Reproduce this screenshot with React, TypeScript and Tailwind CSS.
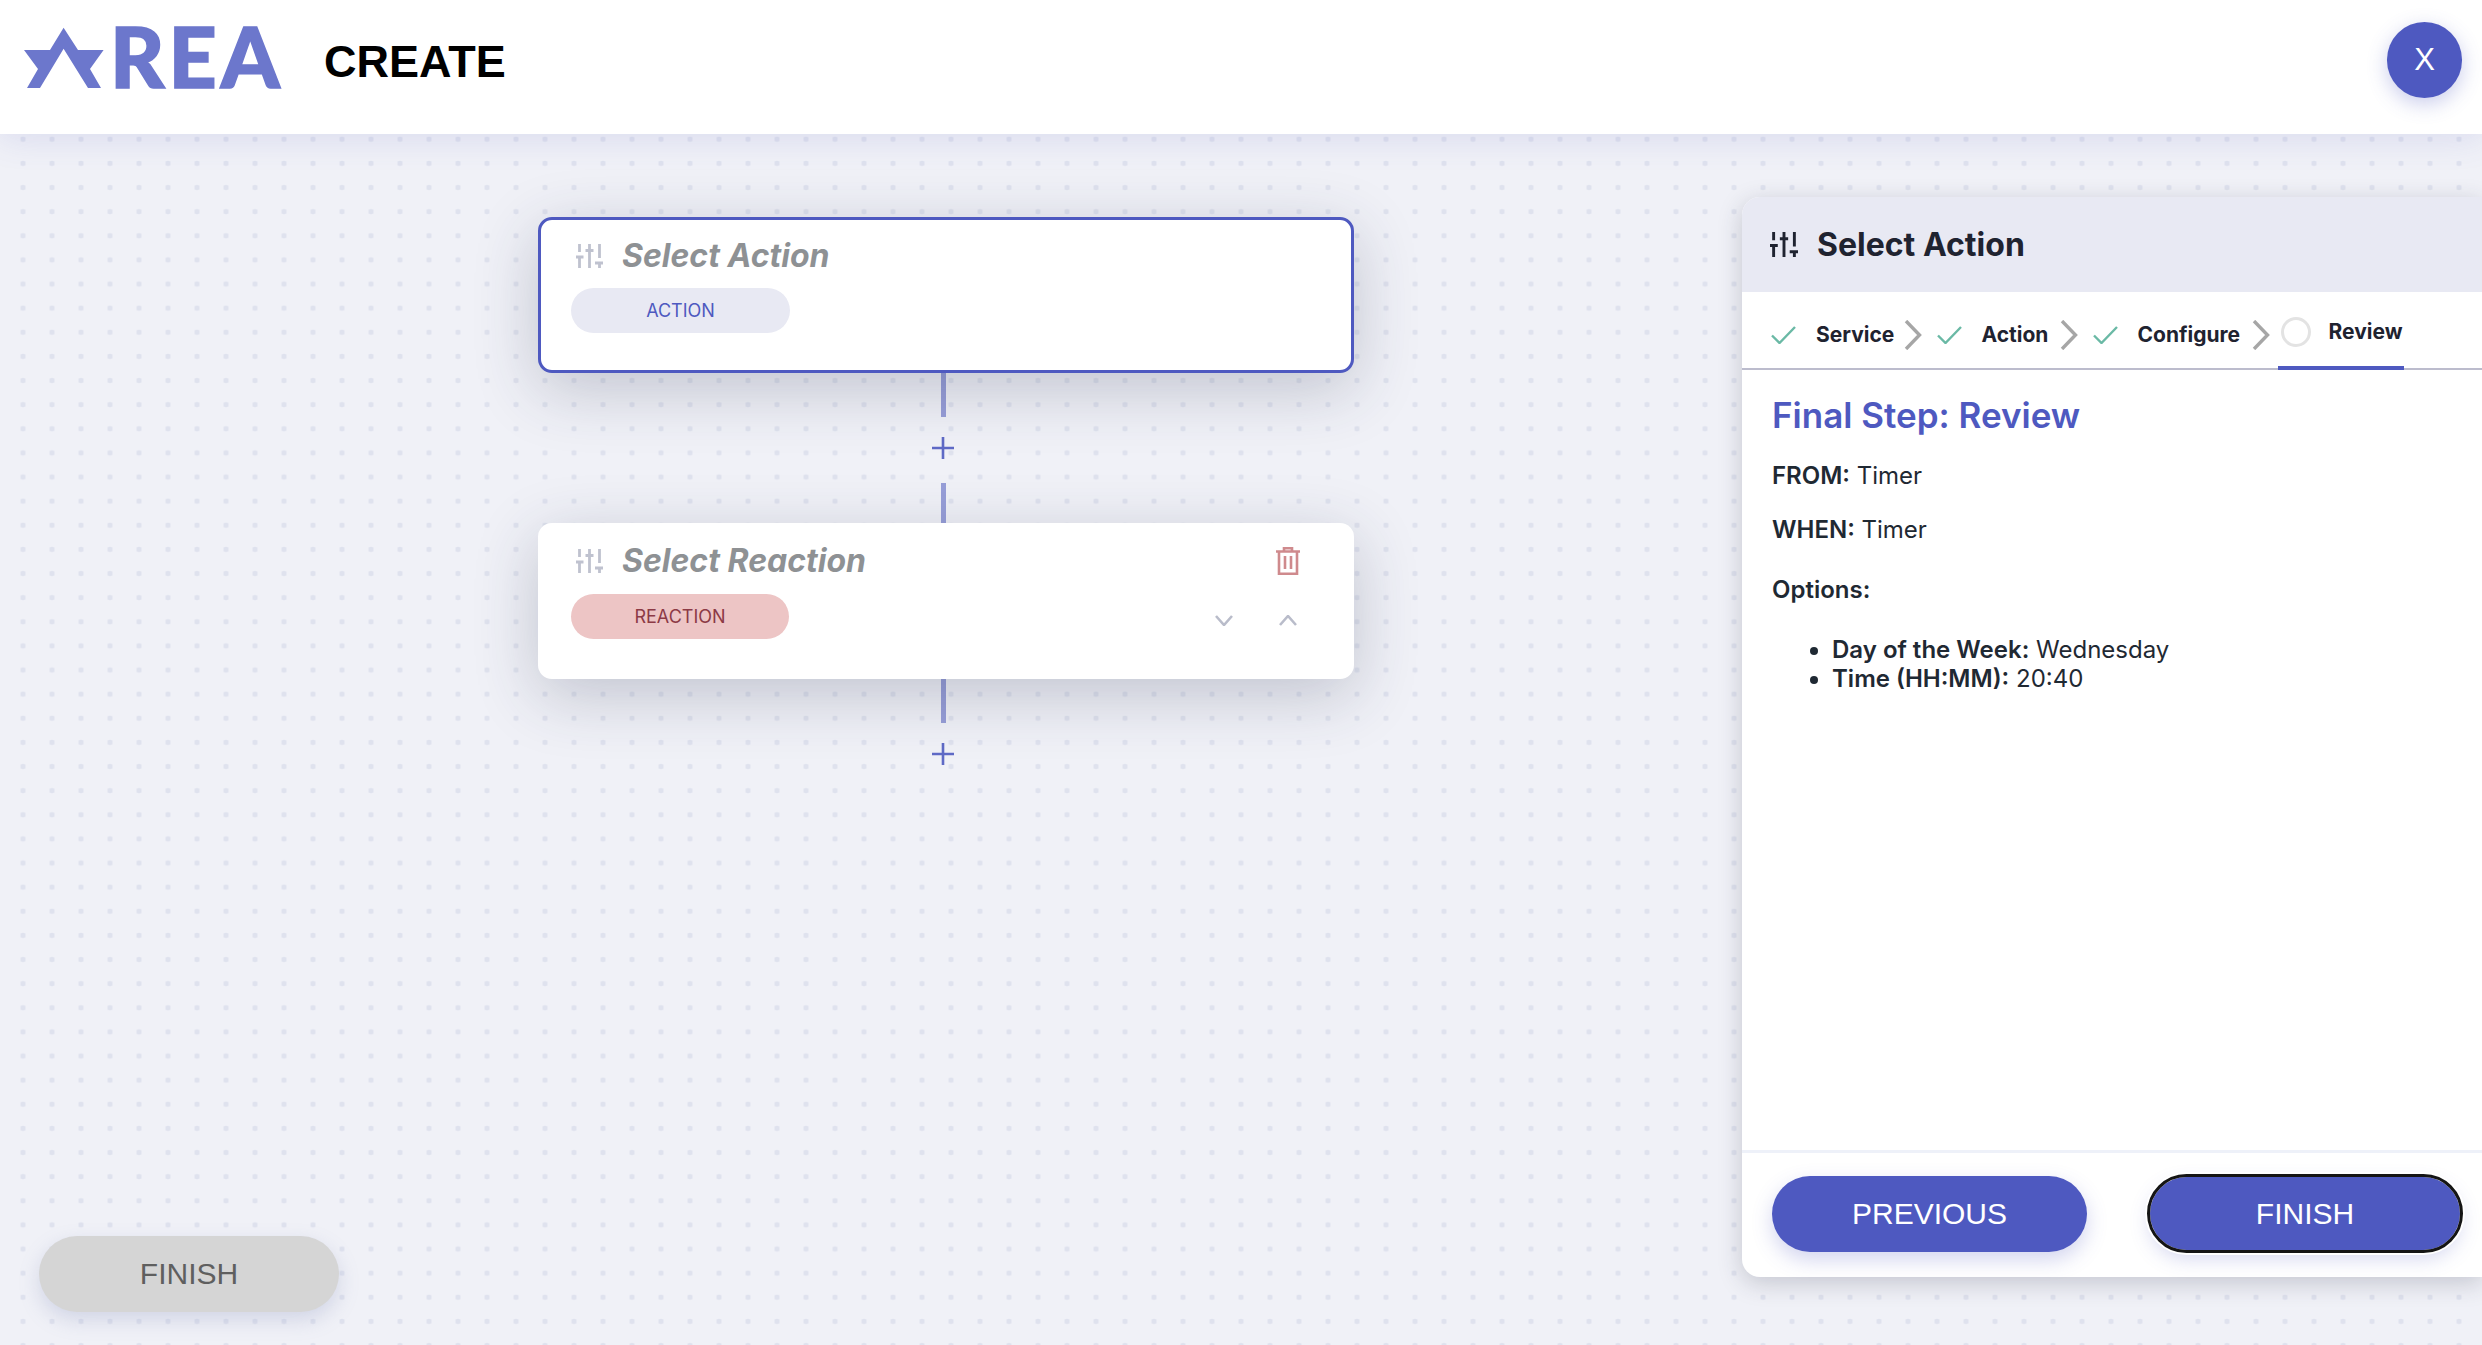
import React from "react";

const Sliders = ({ className }: { className: string }) => (
  <svg viewBox="0 0 27 24" className={className} fill="none" stroke="currentColor" strokeWidth="2.8">
    <path d="M3.5 0V8M0 13H7.5M3.5 14V24M13.5 0V5M9.5 6.5H17.5M13.5 8V24M23.5 0V14M19 19H27M23.5 20V24" />
  </svg>
);

const Check = () => (
  <svg viewBox="0 0 25 18" className="w-[25px] h-[18px] shrink-0 text-[#6ab9a5]" fill="none" stroke="currentColor" strokeWidth="2.4">
    <path d="M1 9.5L8.5 17L24 1" />
  </svg>
);

const Chev = () => (
  <svg viewBox="0 0 18 30" className="w-[18px] h-[30px] shrink-0 text-[#a6a6a6]" fill="none" stroke="currentColor" strokeWidth="3.4">
    <path d="M2 1L15.5 15L2 29" />
  </svg>
);

const Step = ({ label, w }: { label: string; w: string }) => (
  <div className="flex items-center shrink-0">
    <Check />
    <span className={`ml-[20px] mr-[10px] text-[21px] font-bold text-[#1f2330] whitespace-nowrap ${w}`}>{label}</span>
    <Chev />
  </div>
);

const Connector = ({ h }: { h: string }) => <div className={`w-[5px] bg-[#979ed8] mr-[5px] ${h}`} />;

const Plus = () => (
  <svg viewBox="0 0 22 22" className="w-[22px] h-[22px] mt-[20px] mb-[24px] mr-[7px] text-[#5f6ac6]" fill="none" stroke="currentColor" strokeWidth="2.6">
    <path d="M11 0V22M0 11H22" />
  </svg>
);

export default function App() {
  return (
    <div className="w-[2482px] h-[1345px] flex flex-col overflow-hidden font-['Inter',sans-serif] bg-[#f0f1f7]">
      <header className="relative z-10 h-[134px] shrink-0 bg-white flex items-center shadow-[0_2px_34px_rgba(78,89,192,0.16)]">
        <div className="flex items-start ml-[24px] h-[61px] mt-[-20px] text-[#6c77cc]">
          <svg viewBox="0 0 80 61" className="w-[80px] h-[61px] shrink-0" fill="currentColor">
            <path d="M39.6 0.7L54 22.9H79.6L66 42L77 60.9H64L39.6 21.7L16 60.9H3L14 42L0 22.9H26Z" />
          </svg>
          <span className="ml-[6px] mt-[-2px] text-[84px] leading-[61px] font-black font-['Lato',sans-serif] tracking-[4px] [-webkit-text-stroke:1.5px_#6c77cc]">REA</span>
        </div>
        <h1 className="absolute left-[324px] top-[37px] text-[45px] leading-[50px] font-bold text-black font-['Liberation_Sans',sans-serif]">CREATE</h1>
        <button className="absolute left-[2387px] top-[22px] w-[75px] h-[76px] rounded-full bg-[#4e59c0] text-white text-[31px] font-['Liberation_Sans',sans-serif] shadow-[0_6px_20px_rgba(78,89,192,0.3)]">X</button>
      </header>

      <main className="flex-1 flex bg-[radial-gradient(circle,#dfe2ee_2.6px,transparent_3px)] bg-[size:29px_24.14px] bg-[position:8.5px_-6.8px]">
        <div className="w-[1742px] shrink-0 flex flex-col justify-between pl-[39px] pb-[33px] pt-[83px]">
          <div className="ml-[499px] w-[816px] flex flex-col items-center">
            <div className="relative w-full h-[156px] bg-white border-[3px] border-[#4e59c0] rounded-[14px] pt-[16px] pl-[30px] shadow-[0_16px_64px_rgba(40,50,80,0.24)]">
              <div className="flex items-center h-[40px] pl-[5px]">
                <Sliders className="w-[27px] h-[24px] text-[#bfc2cf]" />
                <span className="ml-[19px] text-[32px] font-bold italic text-[#8e9194]">Select Action</span>
              </div>
              <div className="mt-[12px] w-[219px] h-[45px] rounded-full bg-[#e8e9f3] flex items-center justify-center text-[18px] text-[#4e59c0]">ACTION</div>
            </div>
            <Connector h="h-[44px]" />
            <Plus />
            <Connector h="h-[40px]" />
            <div className="relative w-full h-[156px] bg-white rounded-[14px] pt-[18px] pl-[33px] pr-[54px] shadow-[0_16px_64px_rgba(40,50,80,0.24)]">
              <div className="flex items-center h-[40px] pl-[5px]">
                <Sliders className="w-[27px] h-[24px] text-[#bfc2cf]" />
                <span className="ml-[19px] text-[32px] font-bold italic text-[#8e9194]">Select Reaction</span>
                <svg viewBox="0 0 24 28" className="ml-auto w-[24px] h-[28px] text-[#cf8a8d]" fill="none" stroke="currentColor" strokeWidth="2.6">
                  <path d="M0 4.5H24M8 4V1.3H16V4M3 4.5V26.7H21V4.5M9 9V22M15 9V22" />
                </svg>
              </div>
              <div className="mt-[13px] flex items-center">
                <div className="w-[218px] h-[45px] rounded-full bg-[#edc5c5] flex items-center justify-center text-[18px] text-[#8c3a45]">REACTION</div>
                <svg viewBox="0 0 18 11" className="ml-auto mt-[8px] w-[18px] h-[11px] text-[#b9bcca]" fill="none" stroke="currentColor" strokeWidth="2.6">
                  <path d="M1 1L9 10L17 1" />
                </svg>
                <svg viewBox="0 0 18 11" className="ml-[46px] mr-[3px] mt-[8px] w-[18px] h-[11px] text-[#b9bcca]" fill="none" stroke="currentColor" strokeWidth="2.6">
                  <path d="M1 10L9 1L17 10" />
                </svg>
              </div>
            </div>
            <Connector h="h-[44px]" />
            <Plus />
          </div>
          <button className="w-[300px] h-[76px] pb-[2px] rounded-full bg-[#d5d5d5] text-[#5f5f5f] text-[30px] font-['Liberation_Sans',sans-serif] shadow-[0_8px_20px_rgba(120,130,180,0.25)]">FINISH</button>
        </div>

        <aside className="flex-1 mt-[63px] h-[1080px] flex flex-col bg-white rounded-l-[18px] shadow-[0_6px_24px_rgba(40,45,70,0.22)]">
          <div className="h-[95px] shrink-0 bg-[#e8e9f3] rounded-tl-[18px] flex items-center pl-[28px]">
            <Sliders className="w-[28px] h-[25px] text-[#1f2330]" />
            <h2 className="ml-[19px] text-[32px] font-bold text-[#1f2330]">Select Action</h2>
          </div>
          <div className="h-[78px] shrink-0 border-b-2 border-[#bcbccd] flex pl-[29px] gap-[15px]">
            <div className="flex gap-[15px] items-center pt-[9px]">
              <Step label="Service" w="w-[77.5px]" />
              <Step label="Action" w="w-[68px]" />
              <Step label="Configure" w="w-[104px]" />
            </div>
            <div className="ml-[-7px] w-[126px] h-[78px] border-b-4 border-[#4e59c0] flex items-center pl-[3px] pt-[6px]">
              <div className="w-[30px] h-[30px] rounded-full border-[3px] border-[#e3e3e3]" />
              <span className="ml-[18px] text-[21px] font-bold text-[#1f2330]">Review</span>
            </div>
          </div>
          <div className="flex-1 pl-[30px] pt-[22px] text-[24px] text-[#1f2933]">
            <h3 className="text-[35px] leading-[46px] font-semibold text-[#4e59c0]">Final Step: Review</h3>
            <p className="mt-[23px] leading-[29px]"><strong className="font-semibold">FROM:</strong> Timer</p>
            <p className="mt-[25px] leading-[29px]"><strong className="font-semibold">WHEN:</strong> Timer</p>
            <p className="mt-[31px] leading-[29px] font-semibold">Options:</p>
            <ul className="mt-[31px] pl-[60px] list-disc leading-[29px]">
              <li><strong className="font-semibold">Day of the Week:</strong> Wednesday</li>
              <li><strong className="font-semibold">Time (HH:MM):</strong> 20:40</li>
            </ul>
          </div>
          <div className="h-[127px] shrink-0 border-t-[3px] border-[#eef1f9] flex items-start pt-[23px] pl-[30px] gap-[63px] text-white text-[30px] font-['Liberation_Sans',sans-serif]">
            <button className="w-[315px] h-[76px] pb-[2px] rounded-full bg-[#4e59c0] shadow-[0_8px_20px_rgba(78,89,192,0.25)]">PREVIOUS</button>
            <button className="w-[310px] h-[73px] mt-[1px] rounded-full bg-[#4e59c0] outline-[3px] outline-[#151515] shadow-[0_0_0_5px_#fff,0_8px_20px_rgba(78,89,192,0.25)]">FINISH</button>
          </div>
        </aside>
      </main>
    </div>
  );
}
